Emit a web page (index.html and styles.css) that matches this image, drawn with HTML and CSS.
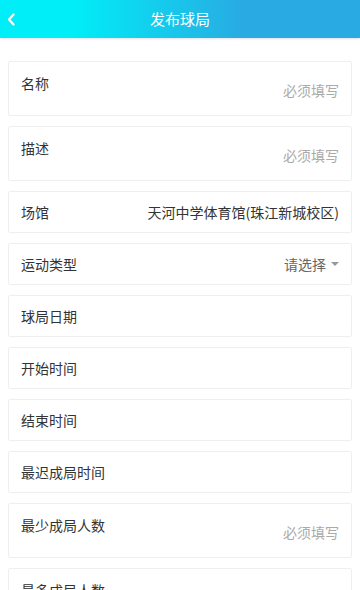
FILE: index.html
```html
<!DOCTYPE html>
<html lang="zh-CN">
  <head>
    <meta charset="UTF-8" />
    <meta name="viewport" content="width=device-width, initial-scale=1.0" />
    <title>发布球局</title>
    <link rel="stylesheet" href="styles.css">
  </head>

  <body>
    <div class="header">
      <span class="back">
        <svg width="8" height="13" viewBox="0 0 8 13">
          <path d="M6.5 1.5 L2 6.5 L6.5 11.5" fill="none" stroke="#fff" stroke-width="2.2" stroke-linecap="round" stroke-linejoin="round" />
        </svg>
      </span>
      <div class="title">发布球局</div>
    </div>

    <div class="form">
      <div class="field tall">
        <span class="label">名称</span>
        <span class="hint">必须填写</span>
      </div>
      <div class="field tall">
        <span class="label">描述</span>
        <span class="hint">必须填写</span>
      </div>
      <div class="field">
        <span class="label">场馆</span>
        <span class="value">天河中学体育馆(珠江新城校区)</span>
      </div>
      <div class="field">
        <span class="label">运动类型</span>
        <span class="select">请选择<i class="caret"></i></span>
      </div>
      <div class="field">
        <span class="label">球局日期</span>
      </div>
      <div class="field">
        <span class="label">开始时间</span>
      </div>
      <div class="field">
        <span class="label">结束时间</span>
      </div>
      <div class="field">
        <span class="label">最迟成局时间</span>
      </div>
      <div class="field tall">
        <span class="label">最少成局人数</span>
        <span class="hint">必须填写</span>
      </div>
      <div class="field tall">
        <span class="label">最多成局人数</span>
        <span class="hint">必须填写</span>
      </div>
    </div>
  </body>
</html>
```

FILE: styles.css
```css
body {
  margin: 0;
  background-color: #fff;
  font-family: "Noto Sans CJK SC", "Noto Sans", sans-serif;
  color: #333;
}

.header {
  position: relative;
  height: 38px;
  display: flex;
  align-items: center;
  justify-content: center;
  background: linear-gradient(to right, #00eef7 20%, #29aae2 68%);
  box-shadow: 0 1px 2px rgba(0, 0, 0, 0.12);
}

.back {
  position: absolute;
  left: 7px;
  top: 13px;
  display: flex;
}

.title {
  color: #fff;
  font-size: 15px;
  line-height: 20px;
}

.form {
  display: flex;
  flex-direction: column;
  gap: 10px;
  padding: 23px 8px 0;
}

.field {
  box-sizing: border-box;
  height: 42px;
  display: flex;
  justify-content: space-between;
  align-items: center;
  padding: 0 12px 0 12px;
  background-color: #fff;
  border: 1px solid #efefef;
  border-radius: 2px;
  font-size: 14px;
}

.field.tall {
  height: 55px;
  align-items: flex-start;
}

.tall .label {
  padding-top: 11px;
}

.tall .hint {
  padding-top: 18px;
}

.hint {
  color: #aaa;
}

.value {
  color: #333;
}

.select {
  display: flex;
  align-items: center;
  color: #666;
}

.caret {
  width: 0;
  height: 0;
  margin-left: 5px;
  border-left: 4px solid transparent;
  border-right: 4px solid transparent;
  border-top: 4px solid #999;
}
```
